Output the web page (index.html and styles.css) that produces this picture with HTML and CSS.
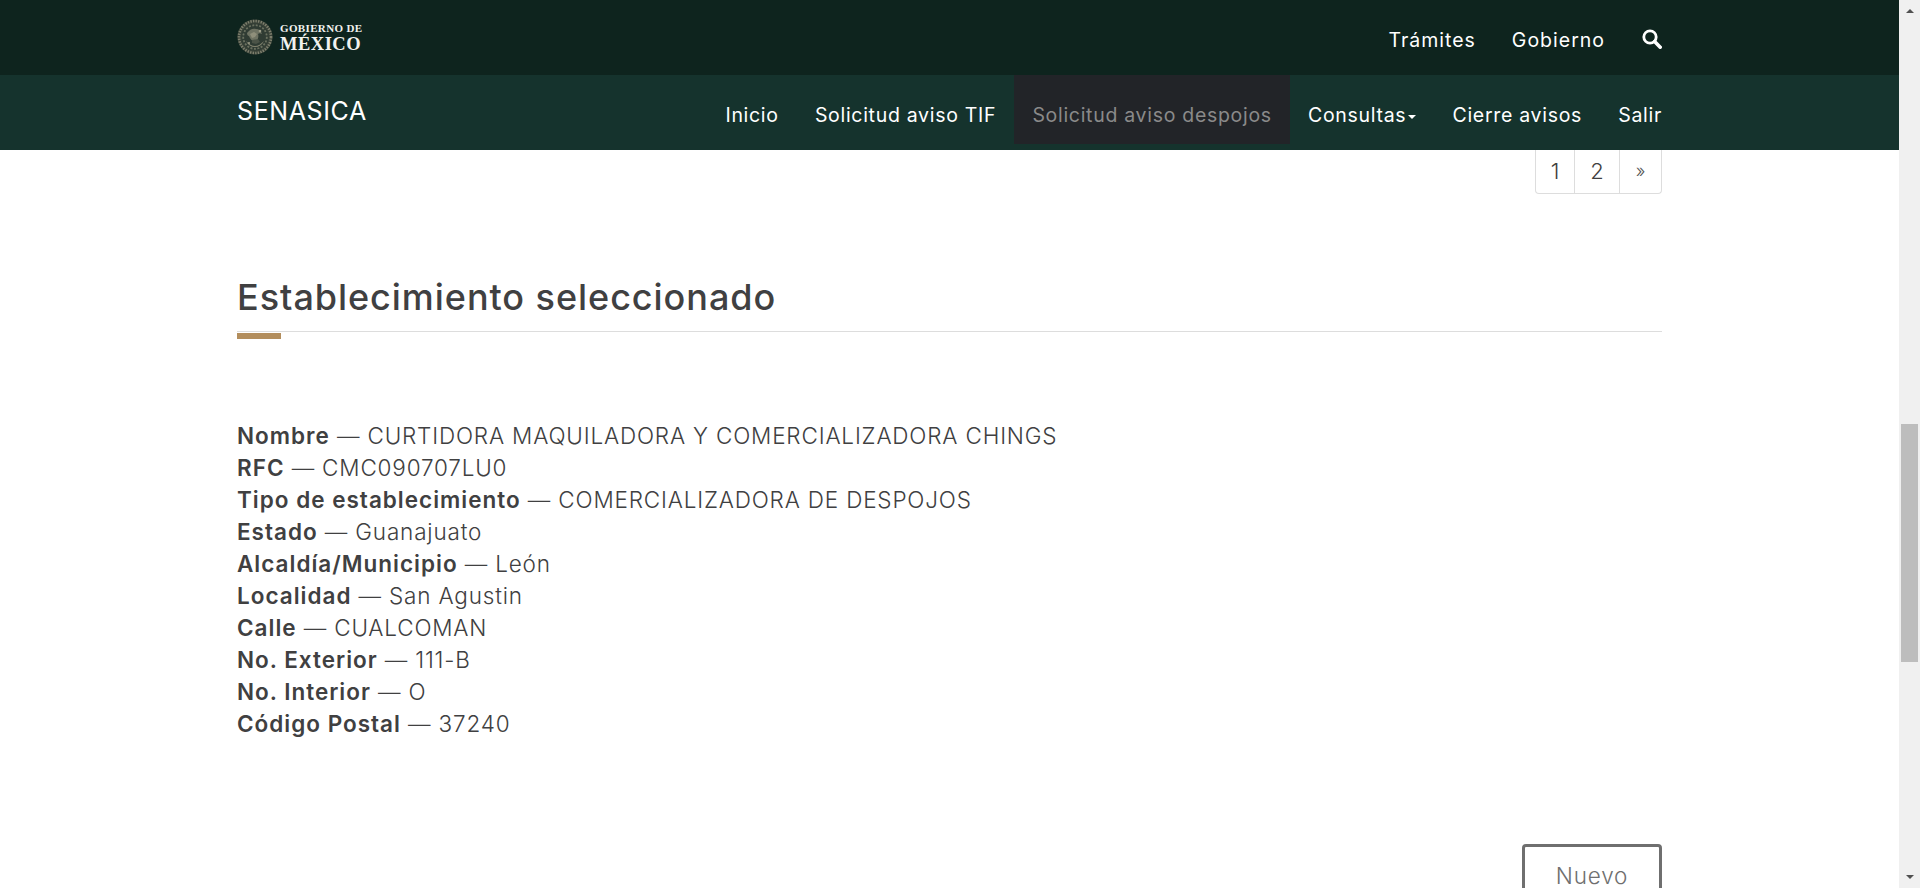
FILE: index.html
```html
<!DOCTYPE html>
<html lang="es">
<head>
<meta charset="utf-8">
<title>SENASICA</title>
<link rel="stylesheet" href="styles.css">
</head>
<body>
<div class="page">
  <div class="main">
    <header class="top-bar">
      <div class="container top-inner">
        <a class="logo" href="#">
          <svg class="seal" viewBox="0 0 36 36" width="36" height="36" aria-hidden="true">
            <circle cx="18" cy="18" r="17.6" fill="#394238"/>
            <circle cx="18" cy="18" r="16" fill="none" stroke="#7d7f6d" stroke-width="2.6" stroke-dasharray="1.4 1.2"/>
            <circle cx="18" cy="18" r="13.6" fill="#2f3b33"/>
            <circle cx="18" cy="18" r="11.8" fill="none" stroke="#6a705f" stroke-width="1.8" stroke-dasharray="2 1.5"/>
            <path d="M10 14c3-4 6-5 9-4 3 0 5 2 6 5-2-1-3-1-4 0 1 3 0 6-3 8-3-1-5-3-6-6-1 0-2-1-2-3z" fill="#6f7363"/>
            <path d="M13 15l4-2 3 2-2 3-3 1z" fill="#8f8f7b"/>
            <path d="M9 22c3 3 6 5 9 5s6-2 9-5c-2 4-5 6-9 6s-7-2-9-6z" fill="#82836f"/>
            <path d="M15 21l6-1 2 3-4 2-4-1z" fill="#4b5347"/>
            <circle cx="23" cy="12" r="1.3" fill="#9c9c87"/>
            <circle cx="12" cy="24" r="1" fill="#9c9c87"/>
          </svg>
          <span class="logo-text">
            <span class="logo-small">GOBIERNO DE</span>
            <span class="logo-big">MÉXICO</span>
          </span>
        </a>
        <nav class="top-nav">
          <a href="#">Trámites</a>
          <a href="#">Gobierno</a>
          <a class="search" href="#" aria-label="Buscar">
            <svg viewBox="0 0 20 20" width="20" height="20" aria-hidden="true">
              <circle cx="8" cy="8" r="6.2" fill="none" stroke="#fff" stroke-width="2.8"/>
              <path d="M12.6 12.6l5.6 5.6" fill="none" stroke="#fff" stroke-width="3.6" stroke-linecap="round"/>
            </svg>
          </a>
        </nav>
      </div>
    </header>
    <div class="sub-bar">
      <div class="container sub-inner">
        <a class="brand" href="#">SENASICA</a>
        <nav class="sub-nav">
          <a href="#">Inicio</a>
          <a href="#">Solicitud aviso TIF</a>
          <a class="active" href="#">Solicitud aviso despojos</a>
          <a href="#">Consultas<span class="caret"></span></a>
          <a href="#">Cierre avisos</a>
          <a href="#">Salir</a>
        </nav>
      </div>
    </div>
    <main class="container content">
      <div class="pagination-row">
        <ul class="pagination">
          <li class="p1">1</li>
          <li class="p2">2</li>
          <li class="p3">»</li>
        </ul>
      </div>
      <h2 class="title">Establecimiento seleccionado</h2>
      <div class="accent"></div>
      <div class="details">
        <div><strong>Nombre</strong> — CURTIDORA MAQUILADORA Y COMERCIALIZADORA CHINGS</div>
        <div><strong>RFC</strong> — CMC090707LU0</div>
        <div><strong>Tipo de establecimiento</strong> — COMERCIALIZADORA DE DESPOJOS</div>
        <div><strong>Estado</strong> — Guanajuato</div>
        <div><strong>Alcaldía/Municipio</strong> — León</div>
        <div><strong>Localidad</strong> — San Agustin</div>
        <div><strong>Calle</strong> — CUALCOMAN</div>
        <div><strong>No. Exterior</strong> — 111-B</div>
        <div><strong>No. Interior</strong> — O</div>
        <div><strong>Código Postal</strong> — 37240</div>
      </div>
      <div class="actions"><button class="btn" type="button">Nuevo</button></div>
    </main>
  </div>
  <aside class="scrollbar" aria-hidden="true">
    <span class="arrow-up"></span>
    <div class="track"><div class="thumb"></div></div>
    <span class="arrow-down"></span>
  </aside>
</div>
</body>
</html>
```
FILE: styles.css
```css
* { box-sizing: border-box; }
html, body { margin: 0; height: 100%; overflow: hidden; }
body {
  font-family: Inter, "Open Sans", "Liberation Sans", sans-serif;
  color: #404041;
  background: #fff;
}
a { color: inherit; text-decoration: none; }

.page { display: flex; height: 888px; }
.main { flex: 1; min-width: 0; height: 888px; overflow: hidden; }
.container { width: 1425px; margin: 0 auto; }

.top-bar { height: 75px; background: #0e241e; color: #fff; }
.top-inner { display: flex; justify-content: space-between; height: 75px; }
.logo { display: flex; align-items: center; gap: 7px; padding-bottom: 2px; }
.seal { display: block; }
.logo-text { display: flex; flex-direction: column; gap: 2px; padding-top: 2px; font-family: "Liberation Serif", serif; font-weight: 700; color: #f2f2ee; }
.logo-small { font-size: 11px; line-height: 11px; letter-spacing: 0.36px; white-space: nowrap; }
.logo-big { font-size: 18.5px; line-height: 16px; letter-spacing: 0.5px; }

.top-nav { display: flex; align-items: flex-start; gap: 36px; padding-top: 29px; font-size: 19.5px; line-height: 22px; letter-spacing: 1px; }
.search { display: block; height: 20px; margin-left: 1px; }
.search svg { display: block; }

.sub-bar { height: 75px; background: #15332d; color: #fff; }
.sub-inner { display: flex; justify-content: space-between; height: 75px; }
.brand { font-size: 25px; line-height: 30px; padding-top: 21px; letter-spacing: 0.6px; font-weight: 400; }
.sub-nav { display: flex; align-items: flex-start; font-size: 19.5px; line-height: 22px; letter-spacing: 0.7px; }
.sub-nav a { display: block; height: 69px; padding: 29px 18.1px 0; white-space: nowrap; }
.sub-nav a:last-child { padding-right: 0; }
.sub-nav .active { background: #222428; color: #8a8a8a; }
.caret {
  display: inline-block;
  margin-left: 2px;
  vertical-align: middle;
  border-top: 4px solid #fff;
  border-left: 4.5px solid transparent;
  border-right: 4.5px solid transparent;
}

.pagination-row { display: flex; justify-content: flex-end; }
.pagination { display: flex; margin: 0; padding: 0; list-style: none; height: 44px; font-weight: 300; font-size: 22px; line-height: 42px; text-align: center; }
.pagination li { border: 1px solid #ddd; border-top: 0; border-left: 0; }
.p1 { width: 40px; border-left: 1px solid #ddd !important; border-bottom-left-radius: 4px; }
.p2 { width: 45px; }
.p3 { width: 42px; border-bottom-right-radius: 4px; font-size: 18px; color: #555; }

.title { margin: 83px 0 0; height: 55px; padding-bottom: 15px; font-size: 36px; line-height: 40px; font-weight: 550; letter-spacing: 0.95px; color: #404041; border-bottom: 1px solid #ddd; }
.accent { width: 44px; height: 6px; margin-top: 1px; background: #b38e5d; }

.details { margin-top: 81px; font-size: 22.5px; line-height: 32px; font-weight: 300; letter-spacing: 0.82px; }
.details strong { font-weight: 600; letter-spacing: 1px; }

.actions { display: flex; justify-content: flex-end; margin-top: 104px; }
.btn { flex: none; width: 140px; height: 62px; padding: 0; border: 3px solid #6f6f6f; border-radius: 4px; background: #fff; color: #6f6f6f; font-family: inherit; font-size: 22.5px; font-weight: 300; letter-spacing: 0.8px; }

.scrollbar { flex: none; width: 21px; height: 888px; display: flex; flex-direction: column; align-items: center; background: #f0f0f0; }
.arrow-up, .arrow-down { flex: none; width: 0; height: 0; border-left: 4.5px solid transparent; border-right: 4.5px solid transparent; }
.arrow-up { margin: 9px 0 5px; border-bottom: 4px solid #505050; }
.arrow-down { margin: 5px 0 9px; border-top: 4px solid #505050; }
.track { flex: 1; width: 100%; padding: 0 2px; }
.thumb { width: 17px; height: 238px; margin-top: 406px; background: #bdbdbd; }
```
